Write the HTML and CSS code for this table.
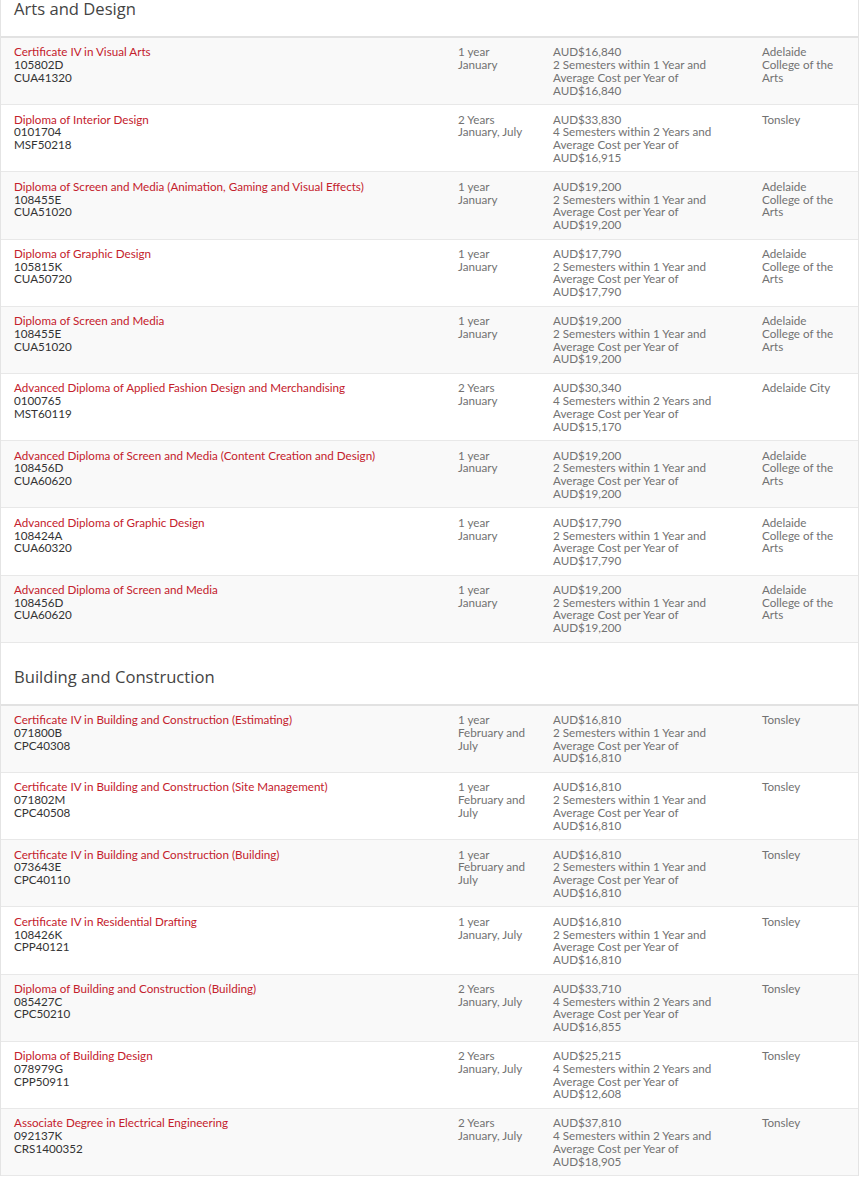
FILE: index.html
```html
<!DOCTYPE html>
<html lang="en">
<head>
<meta charset="utf-8">
<title>Courses</title>
<link rel="stylesheet" href="styles.css">
</head>
<body>
<div class="page">
  <section class="area">
    <h2 class="area-title">Arts and Design</h2>
    <div class="row">
      <div class="cell c-course"><a class="course" href="#">Certificate IV in Visual Arts</a><br>105802D<br>CUA41320</div>
      <div class="cell c-dur">1 year<br>January</div>
      <div class="cell c-cost">AUD$16,840<br>2 Semesters within 1 Year and Average Cost per Year of AUD$16,840</div>
      <div class="cell c-loc">Adelaide College of the Arts</div>
    </div>
    <div class="row">
      <div class="cell c-course"><a class="course" href="#">Diploma of Interior Design</a><br>0101704<br>MSF50218</div>
      <div class="cell c-dur">2 Years<br>January, July</div>
      <div class="cell c-cost">AUD$33,830<br>4 Semesters within 2 Years and Average Cost per Year of AUD$16,915</div>
      <div class="cell c-loc">Tonsley</div>
    </div>
    <div class="row">
      <div class="cell c-course"><a class="course" href="#">Diploma of Screen and Media (Animation, Gaming and Visual Effects)</a><br>108455E<br>CUA51020</div>
      <div class="cell c-dur">1 year<br>January</div>
      <div class="cell c-cost">AUD$19,200<br>2 Semesters within 1 Year and Average Cost per Year of AUD$19,200</div>
      <div class="cell c-loc">Adelaide College of the Arts</div>
    </div>
    <div class="row">
      <div class="cell c-course"><a class="course" href="#">Diploma of Graphic Design</a><br>105815K<br>CUA50720</div>
      <div class="cell c-dur">1 year<br>January</div>
      <div class="cell c-cost">AUD$17,790<br>2 Semesters within 1 Year and Average Cost per Year of AUD$17,790</div>
      <div class="cell c-loc">Adelaide College of the Arts</div>
    </div>
    <div class="row">
      <div class="cell c-course"><a class="course" href="#">Diploma of Screen and Media</a><br>108455E<br>CUA51020</div>
      <div class="cell c-dur">1 year<br>January</div>
      <div class="cell c-cost">AUD$19,200<br>2 Semesters within 1 Year and Average Cost per Year of AUD$19,200</div>
      <div class="cell c-loc">Adelaide College of the Arts</div>
    </div>
    <div class="row">
      <div class="cell c-course"><a class="course" href="#">Advanced Diploma of Applied Fashion Design and Merchandising</a><br>0100765<br>MST60119</div>
      <div class="cell c-dur">2 Years<br>January</div>
      <div class="cell c-cost">AUD$30,340<br>4 Semesters within 2 Years and Average Cost per Year of AUD$15,170</div>
      <div class="cell c-loc">Adelaide City</div>
    </div>
    <div class="row">
      <div class="cell c-course"><a class="course" href="#">Advanced Diploma of Screen and Media (Content Creation and Design)</a><br>108456D<br>CUA60620</div>
      <div class="cell c-dur">1 year<br>January</div>
      <div class="cell c-cost">AUD$19,200<br>2 Semesters within 1 Year and Average Cost per Year of AUD$19,200</div>
      <div class="cell c-loc">Adelaide College of the Arts</div>
    </div>
    <div class="row">
      <div class="cell c-course"><a class="course" href="#">Advanced Diploma of Graphic Design</a><br>108424A<br>CUA60320</div>
      <div class="cell c-dur">1 year<br>January</div>
      <div class="cell c-cost">AUD$17,790<br>2 Semesters within 1 Year and Average Cost per Year of AUD$17,790</div>
      <div class="cell c-loc">Adelaide College of the Arts</div>
    </div>
    <div class="row">
      <div class="cell c-course"><a class="course" href="#">Advanced Diploma of Screen and Media</a><br>108456D<br>CUA60620</div>
      <div class="cell c-dur">1 year<br>January</div>
      <div class="cell c-cost">AUD$19,200<br>2 Semesters within 1 Year and Average Cost per Year of AUD$19,200</div>
      <div class="cell c-loc">Adelaide College of the Arts</div>
    </div>
  </section>

  <section class="area">
    <h2 class="area-title">Building and Construction</h2>
    <div class="row">
      <div class="cell c-course"><a class="course" href="#">Certificate IV in Building and Construction (Estimating)</a><br>071800B<br>CPC40308</div>
      <div class="cell c-dur">1 year<br>February and July</div>
      <div class="cell c-cost">AUD$16,810<br>2 Semesters within 1 Year and Average Cost per Year of AUD$16,810</div>
      <div class="cell c-loc">Tonsley</div>
    </div>
    <div class="row">
      <div class="cell c-course"><a class="course" href="#">Certificate IV in Building and Construction (Site Management)</a><br>071802M<br>CPC40508</div>
      <div class="cell c-dur">1 year<br>February and July</div>
      <div class="cell c-cost">AUD$16,810<br>2 Semesters within 1 Year and Average Cost per Year of AUD$16,810</div>
      <div class="cell c-loc">Tonsley</div>
    </div>
    <div class="row">
      <div class="cell c-course"><a class="course" href="#">Certificate IV in Building and Construction (Building)</a><br>073643E<br>CPC40110</div>
      <div class="cell c-dur">1 year<br>February and July</div>
      <div class="cell c-cost">AUD$16,810<br>2 Semesters within 1 Year and Average Cost per Year of AUD$16,810</div>
      <div class="cell c-loc">Tonsley</div>
    </div>
    <div class="row">
      <div class="cell c-course"><a class="course" href="#">Certificate IV in Residential Drafting</a><br>108426K<br>CPP40121</div>
      <div class="cell c-dur">1 year<br>January, July</div>
      <div class="cell c-cost">AUD$16,810<br>2 Semesters within 1 Year and Average Cost per Year of AUD$16,810</div>
      <div class="cell c-loc">Tonsley</div>
    </div>
    <div class="row">
      <div class="cell c-course"><a class="course" href="#">Diploma of Building and Construction (Building)</a><br>085427C<br>CPC50210</div>
      <div class="cell c-dur">2 Years<br>January, July</div>
      <div class="cell c-cost">AUD$33,710<br>4 Semesters within 2 Years and Average Cost per Year of AUD$16,855</div>
      <div class="cell c-loc">Tonsley</div>
    </div>
    <div class="row">
      <div class="cell c-course"><a class="course" href="#">Diploma of Building Design</a><br>078979G<br>CPP50911</div>
      <div class="cell c-dur">2 Years<br>January, July</div>
      <div class="cell c-cost">AUD$25,215<br>4 Semesters within 2 Years and Average Cost per Year of AUD$12,608</div>
      <div class="cell c-loc">Tonsley</div>
    </div>
    <div class="row">
      <div class="cell c-course"><a class="course" href="#">Associate Degree in Electrical Engineering</a><br>092137K<br>CRS1400352</div>
      <div class="cell c-dur">2 Years<br>January, July</div>
      <div class="cell c-cost">AUD$37,810<br>4 Semesters within 2 Years and Average Cost per Year of AUD$18,905</div>
      <div class="cell c-loc">Tonsley</div>
    </div>
  </section>
</div>
</body>
</html>
```

FILE: styles.css
```css
html, body {
  margin: 0;
  padding: 0;
  background: #ffffff;
}

body {
  font-family: Lato, "Liberation Sans", sans-serif;
  font-size: 11.65px;
  color: #333333;
  overflow: hidden;
}

.page {
  width: 857px;
  margin-top: -25px;
  border-left: 1px solid #e4e4e4;
  border-right: 1px solid #e4e4e4;
}

.area-title {
  margin: 0;
  padding: 23px 13px 16px;
  font-family: "Open Sans", "Noto Sans", sans-serif;
  font-size: 16.6px;
  font-weight: 400;
  line-height: 22px;
  color: #444444;
  border-bottom: 2px solid #e2e2e2;
  background: #ffffff;
}

.row {
  display: grid;
  grid-template-columns: 444px 95px 209px 1fr;
  border-bottom: 1px solid #e8e8e8;
  background: #ffffff;
}

.row:nth-of-type(odd) {
  background: #f9f9f9;
}

.cell {
  padding: 8.4px 13px 7px;
  line-height: 12.7px;
}

.c-dur,
.c-cost,
.c-loc {
  color: #727272;
}

.course {
  color: #c4212c;
  text-decoration: none;
}
```
